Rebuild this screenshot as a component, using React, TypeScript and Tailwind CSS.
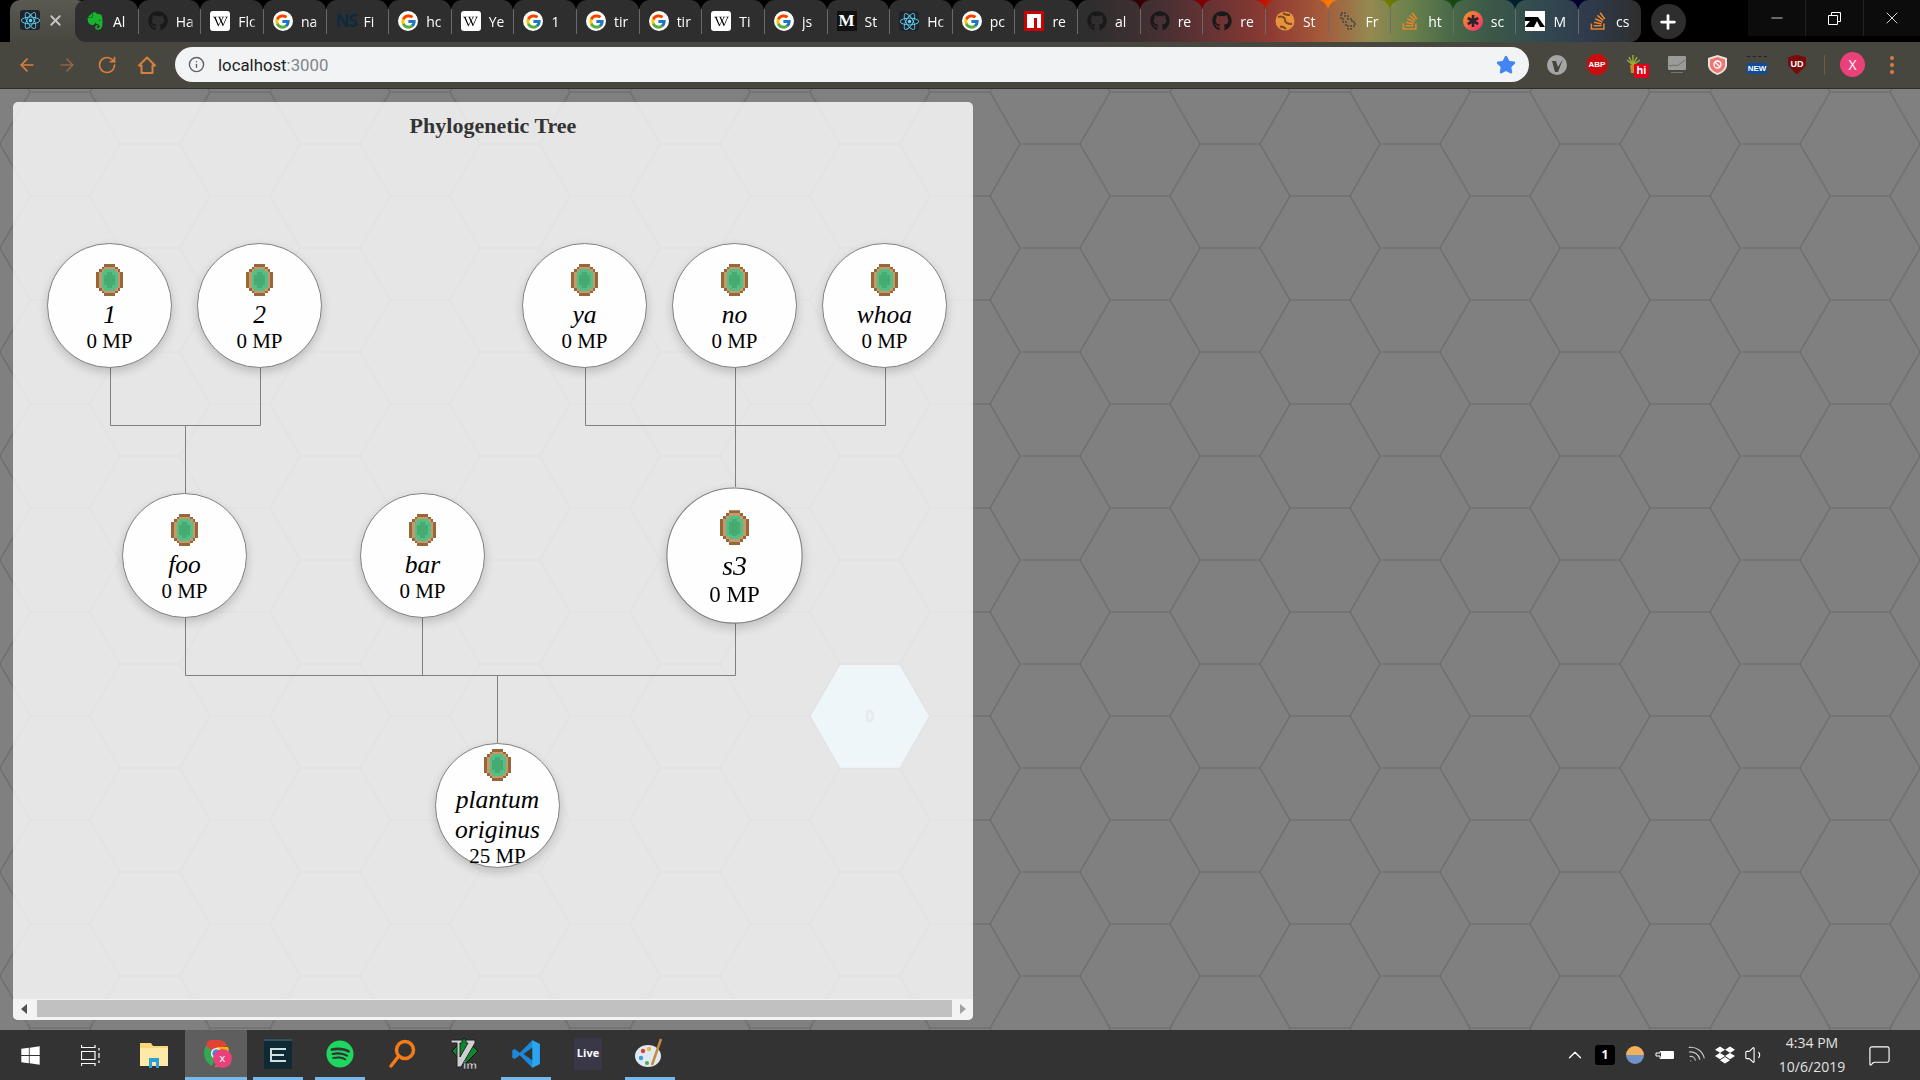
import type { ReactNode } from 'react';
import { ArrowLeft, ArrowRight, RotateCw, Info, Star, ChevronUp, Wifi, Volume1, MessageSquare, X, Plus, Minus } from 'lucide-react';
import { FaEvernote, FaGithub, FaWikipediaW, FaReact, FaStackOverflow, FaSpotify, FaWindows, FaDropbox } from 'react-icons/fa';
import { FcGoogle } from 'react-icons/fc';

// Favicons
const GoogleIcon = () => (
  <div className="w-5 h-5 rounded-full bg-white flex items-center justify-center shrink-0">
    <FcGoogle size={17} />
  </div>
);
const WikiIcon = () => (
  <div className="w-5 h-5 rounded-[3px] bg-white flex items-center justify-center shrink-0">
    <FaWikipediaW size={15} className="text-black" />
  </div>
);
const GithubIcon = () => <FaGithub size={20} className="text-[#191919] shrink-0" />;
const ReactIcon = () => (
  <div className="w-5 h-5 rounded-[3px] bg-[#20232a] flex items-center justify-center shrink-0">
    <FaReact size={19} className="text-[#61dafb]" />
  </div>
);
const StackIcon = () => <FaStackOverflow size={20} className="text-[#e8842c] shrink-0" />;

const NpmIcon = () => (
  <svg width="20" height="20" viewBox="0 0 20 20" className="shrink-0">
    <rect width="20" height="20" fill="#cb0000" />
    <path d="M3 3H17V17H13V7H10V17H3Z" fill="#fff" />
  </svg>
);
const GlobeIcon = () => (
  <svg width="20" height="20" viewBox="0 0 20 20" className="shrink-0">
    <circle cx="10" cy="10" r="9.5" fill="#e9933f" />
    <path d="M3 6C7 5 10 6 10 9C10 12 13 13 17 13M8 2C10 4 13 4 15 4M5 16C7 15 9 16 11 18" stroke="#7b4a1f" strokeWidth="2" fill="none" />
  </svg>
);
const FractalIcon = () => (
  <svg width="20" height="20" viewBox="0 0 20 20" className="shrink-0">
    <path d="M3 2H7V5H10V8H14V11H17V15H13V18H10V15H8V11H5V7H3Z" fill="none" stroke="#3f4a4a" strokeWidth="1.6" strokeDasharray="2 1" />
  </svg>
);
const AsteriskIcon = () => (
  <svg width="20" height="20" viewBox="0 0 20 20" className="shrink-0">
    <defs>
      <linearGradient id="sc" x1="0" y1="0" x2="1" y2="1">
        <stop offset="0" stopColor="#f99b1c" />
        <stop offset="1" stopColor="#ee2a7b" />
      </linearGradient>
    </defs>
    <circle cx="10" cy="10" r="10" fill="url(#sc)" />
    <path d="M10 4V16M4.8 7L15.2 13M4.8 13L15.2 7" stroke="#30222a" strokeWidth="2.6" />
  </svg>
);
const TaIcon = () => (
  <svg width="20" height="20" viewBox="0 0 20 20" className="shrink-0">
    <rect width="20" height="20" fill="#fff" />
    <path d="M0 6H9L13 6L20 16H0L5 10H0Z" fill="#000" />
    <path d="M9 16L12 10L15 16Z" fill="#fff" />
  </svg>
);

const tabs: { icon: ReactNode; label: string }[] = [
  { icon: <FaEvernote size={20} className="text-[#17b52f] shrink-0" />, label: 'Al' },
  { icon: <GithubIcon />, label: 'Ha' },
  { icon: <WikiIcon />, label: 'Flc' },
  { icon: <GoogleIcon />, label: 'na' },
  { icon: <span className="w-5 shrink-0 text-[17px] font-bold tracking-[-1px] text-[#0c2a3e]">NS</span>, label: 'Fi' },
  { icon: <GoogleIcon />, label: 'hc' },
  { icon: <WikiIcon />, label: 'Ye' },
  { icon: <GoogleIcon />, label: '1' },
  { icon: <GoogleIcon />, label: 'tir' },
  { icon: <GoogleIcon />, label: 'tir' },
  { icon: <WikiIcon />, label: 'Ti' },
  { icon: <GoogleIcon />, label: 'js' },
  {
    icon: (
      <div className="w-5 h-5 bg-[#111] flex items-center justify-center shrink-0 text-white font-['Liberation_Serif',serif] font-bold text-[17px]">
        M
      </div>
    ),
    label: 'St',
  },
  { icon: <ReactIcon />, label: 'Hc' },
  { icon: <GoogleIcon />, label: 'pc' },
  { icon: <NpmIcon />, label: 're' },
  { icon: <GithubIcon />, label: 'al' },
  { icon: <GithubIcon />, label: 're' },
  { icon: <GithubIcon />, label: 're' },
  { icon: <GlobeIcon />, label: 'St' },
  { icon: <FractalIcon />, label: 'Fr' },
  { icon: <StackIcon />, label: 'ht' },
  { icon: <AsteriskIcon />, label: 'sc' },
  { icon: <TaIcon />, label: 'M' },
  { icon: <StackIcon />, label: 'cs' },
];

function TitleBar() {
  return (
    <div className="h-[42px] flex bg-[linear-gradient(90deg,#000_1100px,#5a0008_1170px,#b00000_1250px,#ff7a00_1330px,#6a7a00_1390px,#1a4a10_1450px,#002a2a_1500px,#00003a_1560px,#000_1640px)]">
      <div className="ml-[10px] w-[77px] -mr-[12px] h-full rounded-t-[10px] bg-[linear-gradient(180deg,#5a5a52,#47473f)] flex items-start pt-[10px] pl-[10px] gap-[7px]">
        <ReactIcon />
        <X size={17} strokeWidth={2.5} className="text-[#c8c8c8] mt-[2px]" />
      </div>
      <div className="flex h-full z-10">
        {tabs.map((tab, i) => (
          <div
            key={i}
            className={`w-[62.64px] h-full flex items-center overflow-hidden rounded-t-[11px] bg-fixed bg-[linear-gradient(90deg,#2e2e2e_1090px,#463033_1160px,#6d3333_1220px,#8d3b32_1270px,#a5583a_1320px,#948a50_1370px,#6a814c_1410px,#4a6a48_1450px,#3c5848_1490px,#324a50_1540px,#2f3a4c_1590px,#2e2e2e_1640px)] ${
              i === 0 ? 'rounded-bl-[11px]' : ''
            } ${i === tabs.length - 1 ? 'rounded-br-[11px]' : ''}`}
          >
            <div className={`w-px h-[25px] shrink-0 ${i === 0 ? 'bg-transparent' : 'bg-[#6a6a6a]'}`} />
            <div className="ml-[9px] flex shrink-0 w-5 justify-center">{tab.icon}</div>
            <span className="ml-[8px] w-[22px] overflow-hidden whitespace-nowrap text-white text-[14px] [mask-image:linear-gradient(90deg,#000_60%,transparent_90%)]">
              {tab.label}
            </span>
          </div>
        ))}
      </div>
      <div className="ml-[10px] mt-[4px] w-[35px] h-[35px] rounded-full bg-[#2e2e2e] flex items-center justify-center">
        <Plus size={22} strokeWidth={3} className="text-white" />
      </div>
      <div className="ml-auto h-[36px] flex bg-[#0c0c0c]">
        <div className="w-[58px] flex items-center justify-center border-r border-[#222]">
          <Minus size={18} strokeWidth={1} className="text-white" />
        </div>
        <div className="w-[58px] flex items-center justify-center border-r border-[#222]">
          <svg width="13" height="13" viewBox="0 0 13 13" fill="none" stroke="#fff">
            <path d="M.5 3.5H9.5V12.5H.5ZM3.5 3.5V.5H12.5V9.5H9.5" />
          </svg>
        </div>
        <div className="w-[56px] flex items-center justify-center">
          <X size={20} strokeWidth={1} className="text-white" />
        </div>
      </div>
    </div>
  );
}

const extensions: ReactNode[] = [
  <svg key="v" width="20" height="20" viewBox="0 0 20 20">
    <circle cx="10" cy="10" r="10" fill="#a5a5a5" />
    <path d="M5 6H9L11 12L16 4L11 17H8Z" fill="#45453e" />
  </svg>,
  <div key="abp" className="w-[21px] h-[21px] bg-[#c70d0d] [clip-path:polygon(30%_0,70%_0,100%_30%,100%_70%,70%_100%,30%_100%,0_70%,0_30%)] flex items-center justify-center text-white text-[8px] font-bold font-['Liberation_Sans',sans-serif]">
    ABP
  </div>,
  <div key="hi" className="relative w-5 h-5 ml-[-4px]">
    <svg width="16" height="18" viewBox="0 0 16 18">
      <path d="M8 10L2 5M8 10L4 2M8 10L8 0M8 10L12 2M8 10L15 5" stroke="#9aa83a" strokeWidth="1.5" />
      <path d="M5 10H11L10 18H6Z" fill="#c98a2c" />
    </svg>
    <div className="absolute left-[9px] top-[9px] w-[15px] h-[14px] bg-[#e3001b] rounded-[1px] text-white text-[11px] leading-[13px] font-bold text-center font-['Liberation_Sans',sans-serif]">
      hi
    </div>
  </div>,
  <svg key="an" width="18" height="18" viewBox="0 0 18 18">
    <rect width="18" height="14" rx="1" fill="#9a9a96" />
    <path d="M1 10L6 9L9 10L13 7L17 4" stroke="#6d6d69" fill="none" />
    <rect x="3" y="16" width="12" height="1" fill="#77776f" />
  </svg>,
  <svg key="sh" width="19" height="20" viewBox="0 0 19 20">
    <path d="M9.5 0L19 3V10C19 15 14 18.5 9.5 20C5 18.5 0 15 0 10V3Z" fill="#e9e3dc" />
    <path d="M9.5 2L17 4.5V10C17 14 13 17 9.5 18C6 17 2 14 2 10V4.5Z" fill="#ee7676" />
    <circle cx="9.5" cy="9.5" r="3.5" fill="none" stroke="#fff" strokeWidth="1.3" />
    <path d="M7 7L12 12" stroke="#fff" strokeWidth="1.3" />
  </svg>,
  <div key="new" className="w-5 flex flex-col items-center">
    <div className="w-5 h-[7px] border-t border-dashed border-[#222]" />
    <div className="w-5 h-[11px] bg-[#0f4c9c] text-white text-[8px] leading-[11px] font-bold text-center font-['Liberation_Sans',sans-serif]">
      NEW
    </div>
  </div>,
  <div key="ud" className="w-[18px] h-5 bg-[#7a0b0b] [clip-path:polygon(50%_0,100%_15%,100%_55%,50%_100%,0_55%,0_15%)] flex items-start justify-center pt-[3px] text-white text-[9px] font-bold font-['Liberation_Sans',sans-serif]">
    UD
  </div>,
];

function Toolbar() {
  return (
    <div className="h-[47px] flex items-center bg-[#47473f] border-b border-[#2f2f2a] pb-[1px]">
      <div className="w-[175px] flex items-center pl-[17px] gap-[20px] text-[#d97f3e]">
        <ArrowLeft size={20} />
        <ArrowRight size={20} className="text-[#8c6646]" />
        <RotateCw size={20} />
        <svg width="20" height="20" viewBox="0 0 20 20" fill="none" stroke="currentColor" strokeWidth="2">
          <path d="M2 10.5L10 2.5L18 10.5H15.5V18H4.5V10.5Z" strokeLinejoin="round" />
        </svg>
      </div>
      <div className="w-[1354px] h-[35px] rounded-full bg-[#f1f3f4] flex items-center pl-[13px] pr-[13px]">
        <Info size={17} className="text-[#5f6368]" />
        <span className="ml-[13px] mt-[2px] text-[16.8px] font-['Roboto',sans-serif] text-[#222]">
          localhost<span className="text-[#80868b]">:3000</span>
        </span>
        <Star size={20} className="ml-auto text-[#4285f4] fill-[#4285f4]" />
      </div>
      <div className="ml-[8px] flex items-center">
        {extensions.map((ext, i) => (
          <div key={i} className="w-10 flex items-center justify-center">
            {ext}
          </div>
        ))}
      </div>
      <div className="ml-[7px] w-px h-5 bg-[#6e5c42]" />
      <div className="ml-[15px] w-[25px] h-[25px] rounded-full bg-[#ec407a] text-white text-[14px] flex items-center justify-center">X</div>
      <div className="ml-[25px] flex flex-col gap-[3px]">
        <div className="w-1 h-1 rounded-full bg-[#d97f3e]" />
        <div className="w-1 h-1 rounded-full bg-[#d97f3e]" />
        <div className="w-1 h-1 rounded-full bg-[#d97f3e]" />
      </div>
    </div>
  );
}

// Pixel-art gem shown in each species node
const gemRows = [
  '...dddd...',
  '..dbbbbd..',
  '.dbggggbd.',
  'dbggGGggbd',
  'dbgGGGGgbd',
  'dbgGGGGgbd',
  'dbgGGGGgbd',
  'dbgGGGGgbd',
  'dbggGGggbd',
  '.dbggggbd.',
  '..dbbbbd..',
  '...dddd...',
];
const gemColors: Record<string, string> = { d: '#99663a', b: '#c49a68', g: '#55bd88', G: '#46ab70' };

function Gem() {
  return (
    <svg width="27" height="32" viewBox="0 0 10 12" shapeRendering="crispEdges" className="shrink-0">
      {gemRows.flatMap((row, y) =>
        row.split('').map((c, x) => (c === '.' ? null : <rect key={`${x}-${y}`} x={x} y={y} width="1" height="1" fill={gemColors[c]} />))
      )}
    </svg>
  );
}

const nodes = [
  { lines: ['1'], mp: 0, left: 34, top: 141 },
  { lines: ['2'], mp: 0, left: 184, top: 141 },
  { lines: ['ya'], mp: 0, left: 509, top: 141 },
  { lines: ['no'], mp: 0, left: 659, top: 141 },
  { lines: ['whoa'], mp: 0, left: 809, top: 141 },
  { lines: ['foo'], mp: 0, left: 109, top: 391 },
  { lines: ['bar'], mp: 0, left: 347, top: 391 },
  { lines: ['s3'], mp: 0, left: 659, top: 391, big: true },
  { lines: ['plantum', 'originus'], mp: 25, left: 422, top: 641 },
];

function SpeciesNode({ lines, mp, left, top, big }: { lines: string[]; mp: number; left: number; top: number; big?: boolean }) {
  return (
    <div
      className={`absolute w-[125px] h-[125px] rounded-full bg-[#fefefe] border border-[#808080] shadow-[0_4px_10px_rgba(0,0,0,0.18)] flex flex-col items-center justify-center pt-[6px] text-black ${
        big ? 'scale-[1.09]' : ''
      }`}
      style={{ left, top }}
    >
      <Gem />
      <div className="mt-[4px] text-[25.5px] leading-[30px] italic text-center">
        {lines.map((l) => (
          <div key={l}>{l}</div>
        ))}
      </div>
      <div className="-mt-[1px] text-[21px] leading-[24px] whitespace-nowrap">{mp} MP</div>
    </div>
  );
}

function TreePanel() {
  return (
    <div className="relative ml-[13px] mt-[13px] w-[960px] h-[918px] rounded-[5px] bg-white/80 overflow-hidden flex flex-col font-['Liberation_Serif',serif]">
      <h1 className="pt-[10px] text-center text-[22px] leading-[28px] font-bold text-[#333]">Phylogenetic Tree</h1>
      <div className="flex-1">
        <svg className="absolute inset-0" width="960" height="918" fill="none" stroke="#808080">
          <path d="M97.5 265V323.5H247.5V265M172.5 323.5V391" />
          <path d="M572.5 265V323.5H872.5V265M722.5 265V385" />
          <path d="M172.5 515V573.5H722.5V521M409.5 515V573.5M484.5 573.5V641" />
        </svg>
        {nodes.map((n) => (
          <SpeciesNode key={n.lines[0]} {...n} />
        ))}
        <div className="absolute left-[797.7px] top-[563px] w-[118.3px] h-[102.7px] bg-[#eff6fa] [clip-path:polygon(25%_0,75%_0,100%_50%,75%_100%,25%_100%,0_50%)] flex items-center justify-center text-[#e4eaee] text-[16px] font-bold font-['Open_Sans',sans-serif]">
          0
        </div>
      </div>
      {/* horizontal scrollbar */}
      <div className="h-[21px] pb-[2px] flex items-center bg-[#f3f3f3]">
        <div className="w-[24px] flex justify-center pr-[2px]">
          <div className="w-0 h-0 border-y-[5px] border-y-transparent border-r-[6px] border-r-[#505050]" />
        </div>
        <div className="w-[915px] h-[17px] bg-[#c1c1c1]" />
        <div className="w-[21px] flex justify-center">
          <div className="w-0 h-0 border-y-[5px] border-y-transparent border-l-[6px] border-l-[#a3a3a3]" />
        </div>
      </div>
    </div>
  );
}

function HexBackdrop() {
  return (
    <svg className="absolute inset-0 w-full h-full">
      <defs>
        <pattern id="hex" width="180" height="104" patternUnits="userSpaceOnUse" patternTransform="translate(120 55)">
          <path d="M0 0H60L90 52H150L180 0M0 104H60M60 104L90 52M150 52L180 104" fill="none" stroke="#707070" strokeWidth="1.7" />
        </pattern>
      </defs>
      <rect width="100%" height="100%" fill="url(#hex)" />
    </svg>
  );
}

function TaskSlot({ children, underline, active, full }: { children: ReactNode; underline?: boolean; active?: boolean; full?: boolean }) {
  return (
    <div className={`w-[62px] h-full flex flex-col ${active ? 'bg-[#5e5e5e]' : ''}`}>
      <div className="flex-1 flex items-center justify-center relative">{children}</div>
      <div className={`h-[3px] ${full ? '' : 'mx-[6px]'} ${underline ? 'bg-[#76b9ed]' : ''}`} />
    </div>
  );
}

function Taskbar() {
  return (
    <div className="h-[50px] flex items-center bg-[#333333] font-['Open_Sans',sans-serif]">
      <div className="w-[61px] flex justify-center">
        <FaWindows size={21} className="text-white" />
      </div>
      <div className="w-[61px] mr-[1px] flex justify-center">
        <svg width="21" height="21" viewBox="0 0 21 21" fill="none" stroke="#fff">
          <path d="M.5 0V2.5H14V0M.5 21V18.5H14V21M.5 6.5H14V14.5H.5ZM18 3V5.5M18 8V13M18 15.5V18" strokeWidth="1.2" />
        </svg>
      </div>
      <TaskSlot>
        <svg width="28" height="28" viewBox="0 0 28 28">
          <path d="M0 3H11L13 6H28V26H0Z" fill="#f8d775" />
          <path d="M0 8H28V26H0Z" fill="#ffe9a6" />
          <path d="M9 18H19V28H16V22H12V28H9Z" fill="#2d9fd8" />
        </svg>
      </TaskSlot>
      <TaskSlot active underline full>
        <svg width="27" height="27" viewBox="0 0 27 27">
          <path d="M4 2C9 -2 21 -1 24 5L13.5 13.5L3 8Z" fill="#e34335" />
          <path d="M3 6C-1 12 1 22 9 26L14 14Z" fill="#34a853" />
          <path d="M13.5 7H25C28 14 23 25 12 27L18 15Z" fill="#f4b400" />
          <circle cx="13.5" cy="13.5" r="5.5" fill="#fff" />
          <circle cx="13.5" cy="13.5" r="4.2" fill="#4285f4" />
        </svg>
        <div className="absolute left-[28px] top-[19px] w-[19px] h-[19px] rounded-full bg-[#e8417b] text-white text-[11px] flex items-center justify-center">x</div>
      </TaskSlot>
      <TaskSlot underline>
        <div className="w-[28px] h-[30px] bg-[#0f2a33] border-t-2 border-[#32525c] flex items-center justify-center">
          <div className="w-4 h-[14px] border-2 border-r-0 border-[#cfe0e0] flex items-center">
            <div className="w-3 h-[2px] bg-[#cfe0e0]" />
          </div>
        </div>
      </TaskSlot>
      <TaskSlot underline>
        <FaSpotify size={28} className="text-[#1ed760]" />
      </TaskSlot>
      <TaskSlot>
        <svg width="28" height="30" viewBox="0 0 28 30" fill="none" stroke="#f47b16" strokeWidth="3.5" strokeLinecap="round">
          <circle cx="17" cy="11" r="8.5" />
          <path d="M10 18L3 27" />
        </svg>
      </TaskSlot>
      <TaskSlot>
        <svg width="28" height="32" viewBox="0 0 28 32">
          <path d="M14 0L28 13L14 27L2 13Z" fill="#0b8a2c" stroke="#111" />
          <path d="M1 2H12V5H10V19L18 5H16V2H25V5L11 29H7V5H1Z" fill="#cfcfcf" stroke="#222" />
          <text x="13" y="31" fontSize="11" fontWeight="700" fill="#ddd" stroke="#111" strokeWidth="0.4">im</text>
        </svg>
      </TaskSlot>
      <TaskSlot underline>
        <svg width="30" height="30" viewBox="0 0 24 24">
          <path d="M17 1L7 11L3 8L1 9V15L3 16L7 13L17 23L23 20V4Z" fill="#1e88d8" />
          <path d="M17 1V23L23 20V4Z" fill="#2aa5ef" />
          <path d="M17 7L10 12L17 17Z" fill="#333" />
        </svg>
      </TaskSlot>
      <TaskSlot>
        <div className="w-[28px] h-[32px] bg-[#3a3848] text-white text-[11px] font-bold flex items-center justify-center">Live</div>
      </TaskSlot>
      <TaskSlot underline>
        <svg width="30" height="32" viewBox="0 0 30 32">
          <ellipse cx="13" cy="18" rx="13" ry="11" fill="#dfe9f2" />
          <circle cx="8" cy="13" r="2.2" fill="#d8433b" />
          <circle cx="14" cy="11" r="2.2" fill="#f0b43c" />
          <circle cx="6" cy="20" r="2.2" fill="#3f9be0" />
          <circle cx="12" cy="25" r="2" fill="#4bb04f" />
          <path d="M26 1L17 27" stroke="#c48a3e" strokeWidth="2.5" />
        </svg>
      </TaskSlot>
      <div className="ml-auto flex items-center h-full text-white">
        <ChevronUp size={22} strokeWidth={1.5} className="mr-[9px]" />
        <div className="w-5 h-5 bg-black rounded-[3px] text-[12px] font-bold flex items-center justify-center">1</div>
        <div className="ml-[11px] w-[18px] h-[18px] rounded-full bg-[linear-gradient(180deg,#f2b25a_50%,#6f93c9_50%)]" />
        <svg width="20" height="14" viewBox="0 0 20 14" fill="none" stroke="#fff" className="ml-[11px]">
          <path d="M5 3.5H18.5V10.5H5V8H1V5H5Z" />
          <rect x="6" y="4" width="12" height="6" fill="#fff" stroke="none" />
        </svg>
        <Wifi size={22} strokeWidth={1.2} className="ml-[9px] text-[#ccc] rotate-[35deg]" />
        <FaDropbox size={20} className="ml-[9px]" />
        <Volume1 size={22} strokeWidth={1.2} className="ml-[9px]" />
        <div className="ml-[11px] w-[70px] text-center text-[#e2e2e2] text-[14px] leading-[24px]">
          <div>4:34 PM</div>
          <div>10/6/2019</div>
        </div>
        <MessageSquare size={23} strokeWidth={1.2} className="ml-[21px] mr-[29px]" />
      </div>
    </div>
  );
}

function App() {
  return (
    <div className="w-[1920px] h-screen overflow-hidden flex flex-col font-['Open_Sans',sans-serif]">
      <TitleBar />
      <Toolbar />
      <main className="relative flex-1 bg-[#808080] overflow-hidden">
        <HexBackdrop />
        <TreePanel />
      </main>
      <Taskbar />
    </div>
  );
}

export default App;
